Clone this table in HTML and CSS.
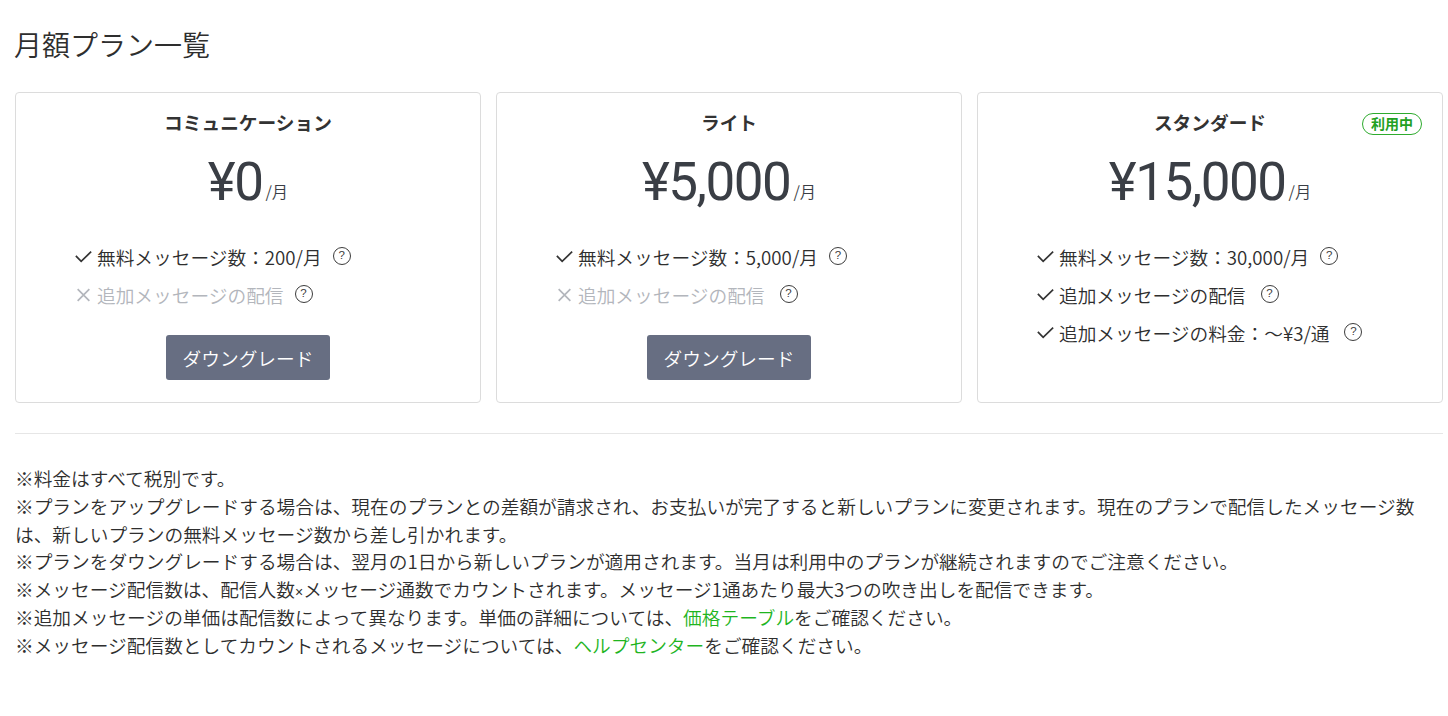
FILE: index.html
```html
<!DOCTYPE html>
<html lang="ja">
<head>
<meta charset="utf-8">
<title>月額プラン一覧</title>
<link rel="stylesheet" href="styles.css">
</head>
<body>
<main class="page">
  <h1 class="page-title">月額プラン一覧</h1>

  <section class="plans">
    <article class="plan">
      <h2 class="plan-name">コミュニケーション</h2>
      <div class="plan-price"><span class="amount">¥0</span><span class="unit">/月</span></div>
      <ul class="features">
        <li class="feature on">
          <svg class="mark" viewBox="0 0 16 16"><path d="M0.8 7.5 L5.8 12.5 L15.2 3.5" /></svg>
          <span>無料メッセージ数：200/月</span>
          <span class="help">?</span>
        </li>
        <li class="feature off">
          <svg class="mark" viewBox="0 0 16 16"><path d="M2.5 3 L13.5 14 M13.5 3 L2.5 14" /></svg>
          <span>追加メッセージの配信</span>
          <span class="help">?</span>
        </li>
      </ul>
      <button class="btn">ダウングレード</button>
    </article>

    <article class="plan">
      <h2 class="plan-name">ライト</h2>
      <div class="plan-price"><span class="amount">¥5,000</span><span class="unit">/月</span></div>
      <ul class="features">
        <li class="feature on">
          <svg class="mark" viewBox="0 0 16 16"><path d="M0.8 7.5 L5.8 12.5 L15.2 3.5" /></svg>
          <span>無料メッセージ数：5,000/月</span>
          <span class="help">?</span>
        </li>
        <li class="feature off">
          <svg class="mark" viewBox="0 0 16 16"><path d="M2.5 3 L13.5 14 M13.5 3 L2.5 14" /></svg>
          <span>追加メッセージの配信</span>
          <span class="help help-wide">?</span>
        </li>
      </ul>
      <button class="btn">ダウングレード</button>
    </article>

    <article class="plan current">
      <span class="badge">利用中</span>
      <h2 class="plan-name">スタンダード</h2>
      <div class="plan-price"><span class="amount">¥15,000</span><span class="unit">/月</span></div>
      <ul class="features">
        <li class="feature on">
          <svg class="mark" viewBox="0 0 16 16"><path d="M0.8 7.5 L5.8 12.5 L15.2 3.5" /></svg>
          <span>無料メッセージ数：30,000/月</span>
          <span class="help">?</span>
        </li>
        <li class="feature on">
          <svg class="mark" viewBox="0 0 16 16"><path d="M0.8 7.5 L5.8 12.5 L15.2 3.5" /></svg>
          <span>追加メッセージの配信</span>
          <span class="help help-wide">?</span>
        </li>
        <li class="feature on">
          <svg class="mark" viewBox="0 0 16 16"><path d="M0.8 7.5 L5.8 12.5 L15.2 3.5" /></svg>
          <span>追加メッセージの料金：～¥3/通</span>
          <span class="help help-wide">?</span>
        </li>
      </ul>
    </article>
  </section>

  <hr class="divider">

  <div class="notes">
    <p>※料金はすべて税別です。</p>
    <p>※プランをアップグレードする場合は、現在のプランとの差額が請求され、お支払いが完了すると新しいプランに変更されます。現在のプランで配信したメッセージ数は、新しいプランの無料メッセージ数から差し引かれます。</p>
    <p>※プランをダウングレードする場合は、翌月の1日から新しいプランが適用されます。当月は利用中のプランが継続されますのでご注意ください。</p>
    <p>※メッセージ配信数は、配信人数<span class="times">×</span>メッセージ通数でカウントされます。メッセージ1通あたり最大3つの吹き出しを配信できます。</p>
    <p>※追加メッセージの単価は配信数によって異なります。単価の詳細については、<a class="link" href="#">価格テーブル</a>をご確認ください。</p>
    <p>※メッセージ配信数としてカウントされるメッセージについては、<a class="link" href="#">ヘルプセンター</a>をご確認ください。</p>
  </div>
</main>
</body>
</html>
```

FILE: styles.css
```css
* { box-sizing: border-box; }

html, body {
  margin: 0;
  padding: 0;
  background: #fff;
}

body {
  font-family: "Noto Sans CJK JP", "Liberation Sans", sans-serif;
  color: #2e2e2e;
  font-size: 18.7px;
  font-weight: 350;
}

.page {
  width: 1428px;
  margin-left: 15px;
  padding-top: 24px;
}

.page-title {
  margin: 0 0 28px -1px;
  font-size: 28px;
  line-height: 40px;
  font-weight: 350;
  color: #2e2e2e;
}

.plans {
  display: grid;
  grid-template-columns: repeat(3, 1fr);
  gap: 15px;
}

.plan {
  position: relative;
  border: 1px solid #dcdcdc;
  border-radius: 4px;
  padding: 15px 0 21px;
  display: flex;
  flex-direction: column;
  align-items: center;
  min-height: 311px;
}

.plan-name {
  margin: 0;
  font-size: 18.7px;
  line-height: 28px;
  font-weight: 700;
  color: #333;
}

.badge {
  position: absolute;
  top: 20px;
  right: 20px;
  height: 22px;
  padding: 0 8px;
  border: 1.5px solid #2eab2e;
  border-radius: 11px;
  color: #22a022;
  font-size: 14px;
  font-weight: 700;
  line-height: 19px;
}

.plan-price {
  margin-top: 14px;
  height: 64px;
  display: flex;
  align-items: baseline;
  color: #3a3e45;
}

.amount {
  font-family: Roboto, "Liberation Sans", sans-serif;
  font-weight: 400;
  font-size: 53px;
  letter-spacing: -1.5px;
  line-height: 64px;
}

.unit {
  font-size: 16.3px;
  margin-left: 3px;
  position: relative;
  top: -2px;
}

.features {
  list-style: none;
  margin: 23px 0 0;
  padding: 0 0 0 59px;
  align-self: stretch;
}

.feature {
  height: 38px;
  display: flex;
  align-items: center;
  font-size: 18.7px;
}

.mark {
  width: 17px;
  height: 17px;
  margin-right: 5px;
  fill: none;
  stroke-width: 1.6;
}

.feature.on { color: #2e2e2e; }
.feature.on .mark { stroke: #333; }
.feature.off { color: #b3b6bc; }
.feature.off .mark { stroke: #b3b6bc; }

.help {
  display: inline-flex;
  align-items: center;
  justify-content: center;
  width: 18px;
  height: 18px;
  margin-left: 11px;
  border: 1.4px solid #3c3c3c;
  border-radius: 50%;
  color: #3c3c3c;
  font-family: "Liberation Sans", sans-serif;
  font-size: 11.5px;
  font-weight: 400;
  line-height: 1;
}

.help-wide { margin-left: 15px; }

.btn {
  margin-top: 22px;
  width: 164px;
  height: 45px;
  border: none;
  border-radius: 3px;
  background: #676e82;
  color: #fff;
  font-family: "Noto Sans CJK JP", sans-serif;
  font-weight: 350;
  font-size: 18.7px;
  cursor: pointer;
}

.divider {
  margin: 30px 0 0;
  border: none;
  border-top: 1px solid #e6e6e6;
}

.notes {
  margin-top: 30px;
  padding-right: 8px;
}

.notes p {
  margin: 0;
  line-height: 27.8px;
  font-size: 18.7px;
  color: #2e2e2e;
}

.times {
  font-family: "Liberation Sans", sans-serif;
  font-size: 14px;
  line-height: 0;
}

.link {
  color: #1fb51f;
  text-decoration: none;
}
```
